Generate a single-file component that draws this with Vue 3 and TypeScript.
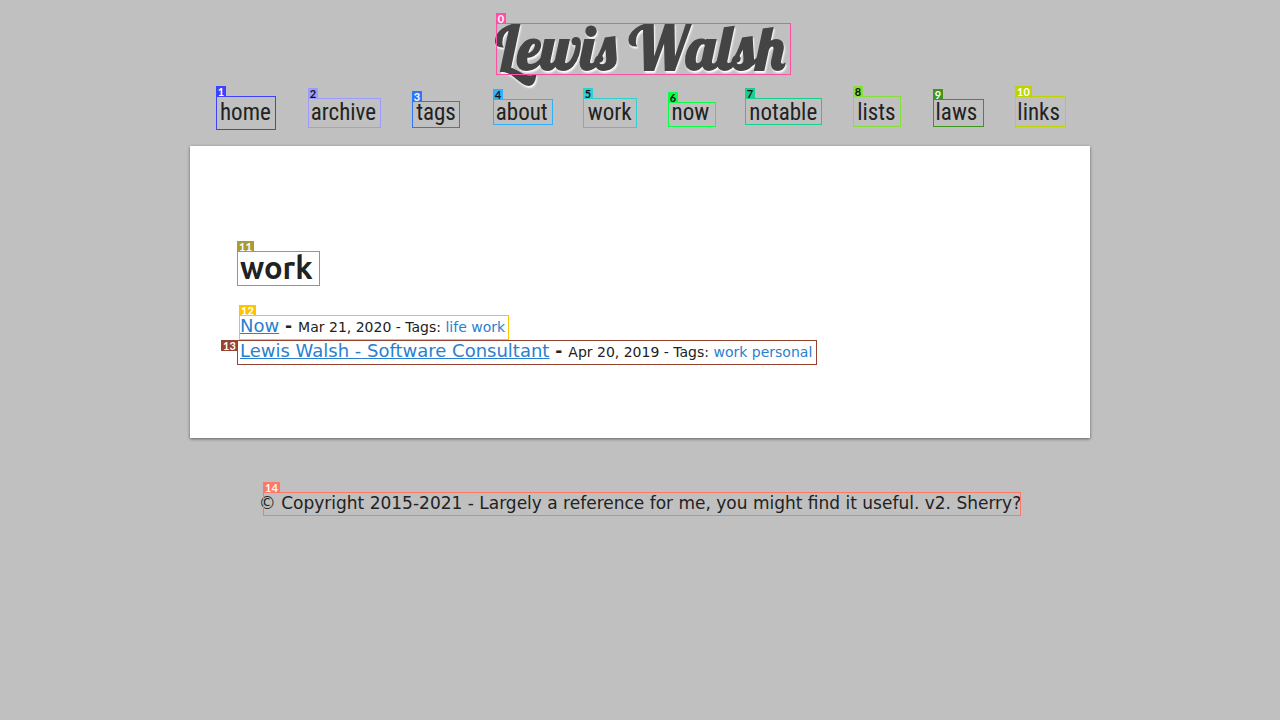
<script setup lang="ts">
interface Post {
  title: string
  date: string
  tags: string[]
}

interface Mark {
  id: number
  x: number
  y: number
  w: number
  h: number
  color: string
  ink: string
  side?: boolean
}

const sections: string[] = ['home', 'archive', 'tags', 'about', 'work', 'now', 'notable', 'lists', 'laws', 'links']

const posts: Post[] = [
  { title: 'Now', date: 'Mar 21, 2020', tags: ['life', 'work'] },
  { title: 'Lewis Walsh - Software Consultant', date: 'Apr 20, 2019', tags: ['work', 'personal'] },
]

// Numbered regions, measured from the top left of the centred column.
const marks: Mark[] = [
  { id: 0, x: 306, y: 23, w: 295, h: 52, color: '#ff4fa3', ink: '#fff' },
  { id: 1, x: 26, y: 96, w: 60, h: 34, color: '#4040ff', ink: '#fff' },
  { id: 2, x: 118, y: 98, w: 73, h: 30, color: '#9c9cff', ink: '#111' },
  { id: 3, x: 222, y: 101, w: 48, h: 27, color: '#2f74ff', ink: '#fff' },
  { id: 4, x: 303, y: 99, w: 60, h: 26, color: '#2fb0ff', ink: '#111' },
  { id: 5, x: 393, y: 98, w: 54, h: 30, color: '#2fd0d0', ink: '#111' },
  { id: 6, x: 478, y: 102, w: 48, h: 25, color: '#0bff45', ink: '#111' },
  { id: 7, x: 555, y: 98, w: 77, h: 27, color: '#17cf8f', ink: '#111' },
  { id: 8, x: 663, y: 96, w: 48, h: 31, color: '#86e03a', ink: '#111' },
  { id: 9, x: 743, y: 99, w: 51, h: 28, color: '#3f9420', ink: '#fff' },
  { id: 10, x: 825, y: 96, w: 51, h: 31, color: '#bfd300', ink: '#fff' },
  { id: 11, x: 47, y: 251, w: 83, h: 35, color: '#aa9c30', ink: '#fff' },
  { id: 12, x: 49, y: 315, w: 270, h: 25, color: '#ffc400', ink: '#fff' },
  { id: 13, x: 47, y: 340, w: 580, h: 25, color: '#98432f', ink: '#fff', side: true },
  { id: 14, x: 73, y: 492, w: 758, h: 24, color: '#ff7766', ink: '#fff' },
]

const boxStyle = (m: Mark) => ({
  left: `${m.x}px`,
  top: `${m.y}px`,
  width: `${m.w}px`,
  height: `${m.h}px`,
  color: m.color,
})
</script>

<template>
  <div class="page">
    <header>
      <h1 class="brand"><a href="#">Lewis Walsh</a></h1>
      <nav>
        <a v-for="s in sections" :key="s" :href="`#${s}`">{{ s }}</a>
      </nav>
    </header>
    <main>
      <h2>work</h2>
      <ul>
        <li v-for="p in posts" :key="p.title">
          <a class="title" href="#">{{ p.title }}</a>
          <b> - </b>
          <small>{{ p.date }} - Tags: <template v-for="t in p.tags" :key="t"><a href="#">{{ t }}</a>{{ ' ' }}</template></small>
        </li>
      </ul>
    </main>
    <footer>© Copyright 2015-2021 - Largely a reference for me, you might find it useful. v2. Sherry?</footer>
    <div class="marks" aria-hidden="true">
      <div v-for="m in marks" :key="m.id" class="mark" :class="{ side: m.side }" :style="boxStyle(m)">
        <span class="tag" :class="{ wide: m.id > 9 }"><span :style="{ color: m.ink }">{{ m.id }}</span></span>
      </div>
    </div>
  </div>
</template>

<style>
body {
  background: #c0c0c0;
}
</style>

<style scoped>
.page {
  position: relative;
  max-width: 900px;
  margin: 0 auto;
  font-family: "DejaVu Sans", sans-serif;
  font-size: 17px;
  color: #222;
}
a {
  color: #2a80cf;
  text-decoration: none;
}
.brand {
  margin: 0;
  padding-top: 7px;
  font: bold 60px/82px Lobster, "Liberation Serif", serif;
  text-align: center;
}
.brand a {
  color: #444;
  text-shadow: 1px 2px 2px #fff;
}
nav {
  display: flex;
  flex-wrap: wrap;
  justify-content: space-between;
  padding: 8px 30px 17px;
  font: 23px/32px "Roboto Condensed", "Liberation Sans Narrow", Roboto, sans-serif;
}
nav a {
  color: #222;
}
main {
  padding: 100px 50px 74px;
  background: #fff;
  box-shadow: 0 1px 3px rgba(0, 0, 0, 0.5);
}
h2 {
  margin: 0;
  font: bold 31px/44px Ubuntu, "Noto Sans", sans-serif;
}
ul {
  margin: 0;
  padding: 24px 0 0;
  list-style: none;
}
li {
  line-height: 25px;
}
.title {
  font-size: 18px;
  line-height: 1;
  text-decoration: underline;
}
small {
  font-size: 14px;
  line-height: 1;
}
footer {
  padding: 53px 0 24px;
  line-height: 24px;
  text-align: center;
}
.marks {
  position: absolute;
  inset: 0;
  pointer-events: none;
}
.mark {
  position: absolute;
  box-sizing: border-box;
  border: 1px solid currentColor;
}
.tag {
  position: absolute;
  left: -1px;
  bottom: 100%;
  width: 10px;
  height: 11px;
  background: currentColor;
  font: bold 11px/11px Lato, sans-serif;
  text-align: center;
}
.wide {
  width: 17px;
}
.side .tag {
  left: auto;
  right: 100%;
  top: -1px;
  bottom: auto;
}
</style>
